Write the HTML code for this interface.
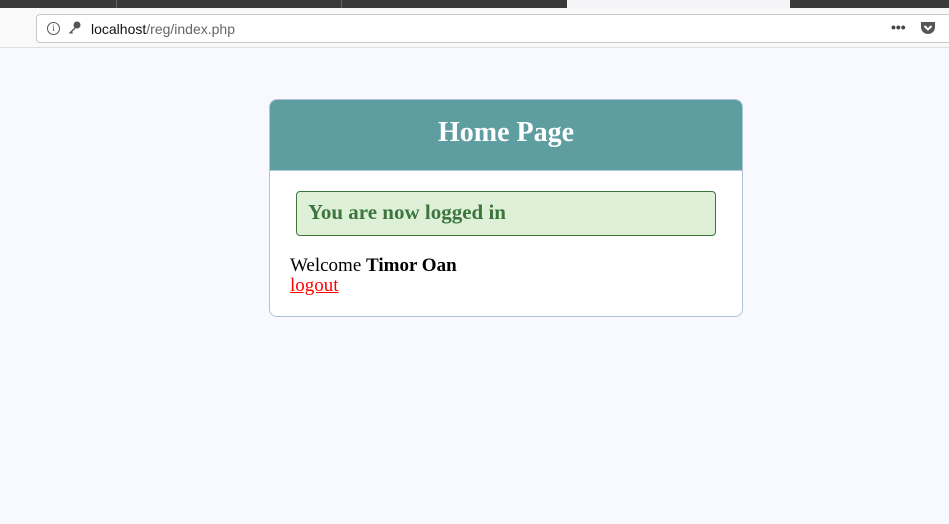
<!DOCTYPE html>
<html><head><meta charset="utf-8"><style>
*{margin:0;padding:0;box-sizing:border-box}
body{width:949px;height:524px;background:#f8f8ff;font-family:"Liberation Serif",serif;position:relative;overflow:hidden}
.tabs{position:absolute;left:0;top:0;width:949px;height:8px;background:#3a3a3a}
.sep{position:absolute;top:0;width:1px;height:8px;background:#666}
.active{position:absolute;left:567px;top:0;width:223px;height:8px;background:#f5f5f7}
.bar{position:absolute;left:0;top:8px;width:949px;height:40px;background:#f9f9fa;border-bottom:1px solid #e0e0e2}
.url{position:absolute;left:36px;top:14px;width:930px;height:29px;background:#fff;border:1px solid #c8c8c8;border-radius:4px;font-family:"Liberation Sans",sans-serif;font-size:14px}
.url .t{position:absolute;left:54px;top:6px;color:#111}
.url .t span{color:#666}
.info{position:absolute;left:10px;top:7px;width:13px;height:13px;border:1px solid #555;border-radius:50%;font-size:9px;line-height:11px;text-align:center;color:#555;font-family:"Liberation Serif",serif}
.card{position:absolute;left:269px;top:99px;width:474px;height:218px;background:#fff;border:1px solid #b0c4de;border-radius:8px;overflow:hidden}
.head{height:71px;background:#5f9ea0;color:#fff;text-align:center;font-weight:bold;font-size:28px;line-height:66px;border-bottom:1px solid #b0c4de}
.alert{position:absolute;left:26px;top:91px;width:420px;height:45px;background:#dff0d8;border:1px solid #3c763d;border-radius:4px;color:#3c763d;font-weight:bold;font-size:21px;padding-left:11px;line-height:40px}
.wel{position:absolute;left:20px;top:156px;font-size:19px;line-height:20px;color:#000}
.wel a{color:red;text-decoration:underline}
</style></head><body>
<div class="tabs"><div class="sep" style="left:116px"></div><div class="sep" style="left:341px"></div><div class="active"></div></div>
<div class="bar"></div>
<div class="url"><div class="info">i</div>
<svg style="position:absolute;left:30px;top:6px" width="14" height="14" viewBox="0 0 14 14"><circle cx="10" cy="4" r="3.5" fill="#555"/><path d="M8 6 L2 12 L3 13 L4 12 L5 13 L6 12 L5 11 L9 7Z" fill="#555"/></svg>
<div class="t">localhost<span>/reg/index.php</span></div>
<div style="position:absolute;left:854px;top:4px;font-size:14px;color:#444;font-weight:bold">•••</div>
<svg style="position:absolute;left:883px;top:6px" width="16" height="15" viewBox="0 0 16 15"><path d="M1 1 H15 V6 A7 7 0 0 1 1 6Z" fill="#555"/><path d="M4.5 5 L8 8.5 L11.5 5" stroke="#fff" stroke-width="2" fill="none"/></svg>
</div>
<div class="card">
<div class="head">Home Page</div>
<div class="alert">You are now logged in</div>
<div class="wel">Welcome <b>Timor Oan</b><br><a>logout</a></div>
</div>
</body></html>
